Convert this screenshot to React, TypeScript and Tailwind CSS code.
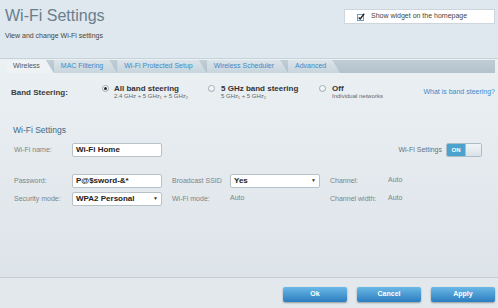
import clsx from "clsx";

const tabs = [
  "Wireless",
  "MAC Filtering",
  "Wi-Fi Protected Setup",
  "Wireless Scheduler",
  "Advanced",
];

function Radio({ on }: { on?: boolean }) {
  return (
    <span className="mt-px flex h-[7px] w-[7px] shrink-0 items-center justify-center rounded-full border border-[#9eacb6] bg-linear-to-b from-white to-[#e6ebee]">
      {on && <span className="h-[3px] w-[3px] rounded-full bg-[#2b2b2b]" />}
    </span>
  );
}

function Label({ children }: { children: React.ReactNode }) {
  return (
    <div className="w-[58px] shrink-0 text-[7px] leading-[8px] text-[#7d8489]">
      {children}
    </div>
  );
}

function Field({
  value,
  select,
}: {
  value: string;
  select?: boolean;
}) {
  return (
    <div className="flex h-[14px] w-[90px] shrink-0 items-center justify-between rounded-[2px] border border-[#b7c1c8] bg-white pl-[3px] pr-[3px] text-[8px] font-bold text-[#222]">
      <span>{value}</span>
      {select && <span className="text-[5px] text-[#333]">▼</span>}
    </div>
  );
}

function Value({ children }: { children: React.ReactNode }) {
  return (
    <div className="pb-[3px] text-[7px] leading-[8px] text-[#7d8489]">
      {children}
    </div>
  );
}

export default function App() {
  return (
    <div className="flex h-[308px] w-[498px] flex-col overflow-hidden bg-[#e9eef2] font-['Liberation_Sans',Arial,sans-serif]">
      {/* Header */}
      <div className="flex h-[59px] shrink-0 justify-between border-b border-[#c6d2da] bg-[#dfe8ef] pl-[5px] pr-[3px]">
        <div>
          <div className="pt-[8px] text-[16px] leading-[16px] text-[#6a7e8d]">
            Wi-Fi Settings
          </div>
          <div className="mt-[8px] text-[7px] leading-[7px] text-[#444]">
            View and change Wi-Fi settings
          </div>
        </div>
        <div className="mt-[9px] flex h-[15px] w-[151px] items-center gap-[6px] border border-[#cdd6dc] bg-white pl-[12px]">
          <svg width="8" height="8" viewBox="0 0 8 8">
            <rect x="0.5" y="1.5" width="6" height="6" fill="white" stroke="#6e9cc4" />
            <path d="M1.6 4.4 L3.2 6 L7.2 0.8" fill="none" stroke="#1e2a33" strokeWidth="1.4" />
          </svg>
          <span className="text-[7px] text-[#444]">Show widget on the homepage</span>
        </div>
      </div>

      {/* Content */}
      <div className="flex-1 bg-linear-to-b from-[#ebf0f3] to-[#dde4e9]">
        {/* Tabs */}
        <div className="ml-[7px] mr-[3px] mt-px flex h-[13px] bg-linear-to-b from-[#c0cdd5] to-[#b2c2cc]">
          {tabs.map((t, i) => (
            <div
              key={t}
              className={clsx(
                "flex items-center pr-[14px] text-[7px] [clip-path:polygon(0_0,calc(100%_-_8px)_0,100%_100%,0_100%)]",
                i === 0
                  ? "bg-[#eef2f5] pl-[6px] text-[#555]"
                  : "bg-linear-to-b from-[#dbe4ea] to-[#c8d5dc] pl-[7px] text-[#3a8bcb]"
              )}
            >
              {t}
            </div>
          ))}
        </div>

        {/* Band steering */}
        <div className="mt-[11px] flex items-center pl-[11px] pr-[3px]">
          <div className="w-[91px] text-[8px] font-bold leading-[9px] text-[#3d3d3d]">
            Band Steering:
          </div>
          <div className="flex w-[106px] items-start gap-[5px]">
            <Radio on />
            <div>
              <div className="text-[8px] font-bold leading-[9px] text-[#333]">
                All band steering
              </div>
              <div className="text-[6px] leading-[7px] text-[#666]">
                2.4 GHz + 5 GHz₁ + 5 GHz₂
              </div>
            </div>
          </div>
          <div className="flex w-[111px] items-start gap-[6px]">
            <Radio />
            <div>
              <div className="text-[8px] font-bold leading-[9px] text-[#333]">
                5 GHz band steering
              </div>
              <div className="text-[6px] leading-[7px] text-[#666]">
                5 GHz₁ + 5 GHz₂
              </div>
            </div>
          </div>
          <div className="flex items-start gap-[6px]">
            <Radio />
            <div>
              <div className="text-[8px] font-bold leading-[9px] text-[#333]">Off</div>
              <div className="text-[6px] leading-[7px] text-[#666]">
                Individual networks
              </div>
            </div>
          </div>
          <div className="ml-auto text-[7px] text-[#3a8bcb]">What is band steering?</div>
        </div>

        {/* Wi-Fi settings */}
        <div className="mt-[25px] pl-[13px] text-[8.5px] leading-[10px] text-[#3f6a86]">
          Wi-Fi Settings
        </div>
        <div className="mt-[8px] flex items-center pl-[14px] pr-[16px]">
          <Label>Wi-Fi name:</Label>
          <Field value="Wi-Fi Home" />
          <div className="ml-auto flex items-center gap-[4px]">
            <span className="text-[7px] text-[#6c7378]">Wi-Fi Settings</span>
            <div className="flex h-[14px] w-[36px] overflow-hidden rounded-[2px] border border-[#aebcc5]">
              <div className="flex w-[18px] items-center justify-center bg-[#4aa2cd] text-[6px] font-bold text-white">
                ON
              </div>
              <div className="flex-1 border-l border-[#aebcc5] bg-linear-to-b from-[#f0f4f6] to-[#dbe3e8]" />
            </div>
          </div>
        </div>

        <div className="mt-[17px] flex items-center pl-[14px]">
          <Label>Password:</Label>
          <Field value="P@$sword-&*" />
          <div className="w-[10px]" />
          <Label>Broadcast SSID</Label>
          <Field value="Yes" select />
          <div className="w-[10px]" />
          <Label>Channel:</Label>
          <Value>Auto</Value>
        </div>
        <div className="mt-[4px] flex items-center pl-[14px]">
          <Label>Security mode:</Label>
          <Field value="WPA2 Personal" select />
          <div className="w-[10px]" />
          <Label>Wi-Fi mode:</Label>
          <div className="w-[90px]">
            <Value>Auto</Value>
          </div>
          <div className="w-[10px]" />
          <Label>Channel width:</Label>
          <Value>Auto</Value>
        </div>
      </div>

      {/* Footer */}
      <div className="flex h-[31px] shrink-0 items-start justify-end gap-[10px] border-t border-[#c3ccd2] bg-[#e2e8ec] pr-[3px] pt-[9px]">
        {["Ok", "Cancel", "Apply"].map((b) => (
          <button
            key={b}
            className="flex h-[15px] w-[64px] items-center justify-center rounded-[2px] bg-linear-to-b from-[#6ab9e6] to-[#2a7dbf] text-[7px] font-bold text-white shadow-[0_1px_2px_rgba(0,0,0,0.35)]"
          >
            {b}
          </button>
        ))}
      </div>
    </div>
  );
}
